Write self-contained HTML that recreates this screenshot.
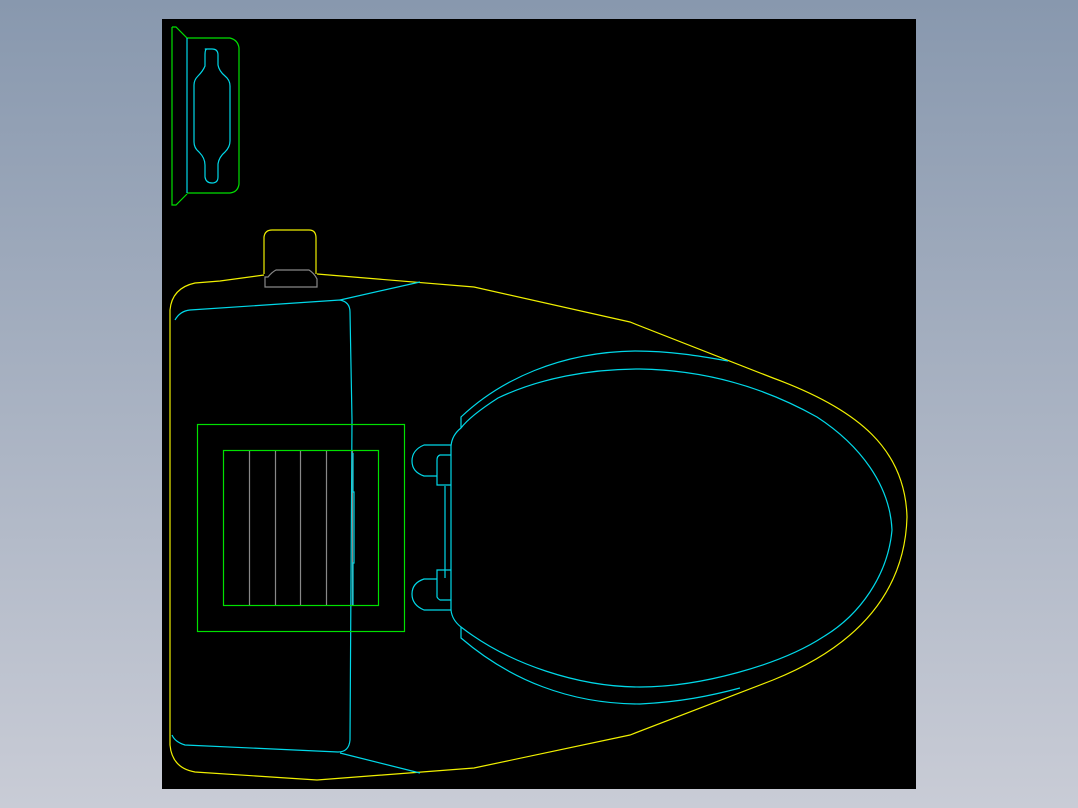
<!DOCTYPE html><html><head><style>
html,body{margin:0;padding:0;width:1078px;height:808px;overflow:hidden;background:linear-gradient(#8898ae,#c9ccd6);}
svg{position:absolute;left:0;top:0}
</style></head><body>
<svg width="1078" height="808" viewBox="0 0 1078 808" fill="none" stroke-width="1.2">
<rect x="162" y="19" width="754" height="770" fill="#000" stroke="none"/>
<g stroke="#00e000">
<path d="M172 27 L172 205 L176 205 L187 194 M172 27 L176 27 L187 38 L230 38 Q238 40 239 48 L239 184 Q238 192 230 193 L187 193"/>
</g>
<path stroke="#00d8e8" d="M187 38 L187 193"/>
<path stroke="#00d8e8" d="M208 49 Q203 49 207 49 Q205 49 205 55 L205 66 Q203 71 198 76 Q194 80 194 85 L194 142 Q194 148 199 152 Q205 158 205 165 L205 177 Q206 183 212 183 Q218 183 218 177 L218 164 Q219 157 225 152 Q230 147 230 141 L230 86 Q230 80 225 76 Q219 71 218 65 L218 55 Q218 49 212 49 Z"/>
<path stroke="#f0f000" d="M264 274 L264 237 Q265 230 272 230 L309 230 Q316 230 316 238 L316 274"/>
<path stroke="#888" d="M265 287 L265 277 L268 277 Q272 272 276 270 L309 270 Q314 273 317 279 L317 287 Z"/>
<path stroke="#f0f000" d="M264 275 L220 281 L195 283 Q172 288 170 310 L170 745 Q172 768 195 772 L317 780 L474 768 L630 735 L773 680 C 860 645, 905 590, 907 517 C 905 450, 860 410, 773 378 L630 322 L474 287 L317 274"/>
<g stroke="#00d8e8">
<path d="M175 320 Q180 311 190 310 L340 300 Q350 302 350 312 L352 420 L350 740 Q349 752 338 752 L185 745 Q175 742 172 735"/>
<path d="M340 300 L420 282 M340 753 L420 773"/>
<path d="M461 428 L461 417 C 500 380, 560 352, 635 351 C 670 351, 700 356, 728 361"/>
<path d="M461 627 L461 638 C 510 680, 570 704, 640 704 C 680 702, 710 696, 740 688"/>
<path d="M461 428 Q470 416 498 398 C 540 378, 590 369, 640 369 C 700 370, 760 385, 817 417 C 860 445, 890 485, 892 530 C 888 575, 860 615, 823 637 C 780 665, 700 687, 640 687 C 580 687, 510 665, 461 627 Q452 620 451 610 L451 446 Q452 435 461 428 Z"/>
<path d="M451 445 L424 445 Q412 450 412 461 Q412 472 424 476 L437 476 L437 485 L451 485 M451 455 L440 455 Q437 456 437 460 L437 476"/>
<path d="M445 486 L445 578"/>
<path d="M451 570 L437 570 L437 579 L424 579 Q412 583 412 594 Q412 605 424 610 L451 610 M437 579 L437 597 Q438 599 440 600 L451 600"/>
</g>
<g stroke="#00e000">
<rect x="197.5" y="424.5" width="207" height="207"/>
<rect x="223.5" y="450.5" width="155" height="155"/>
</g>
<g stroke="#888">
<path d="M249.5 451 V605 M275.5 451 V605 M300.5 451 V605 M326.5 451 V605 M352.5 451 V605"/>
</g>
<path stroke="#00d8e8" d="M353 453 L353 492 L354 492 L354 563 L353 563 L353 605"/>
</svg>
</body></html>
